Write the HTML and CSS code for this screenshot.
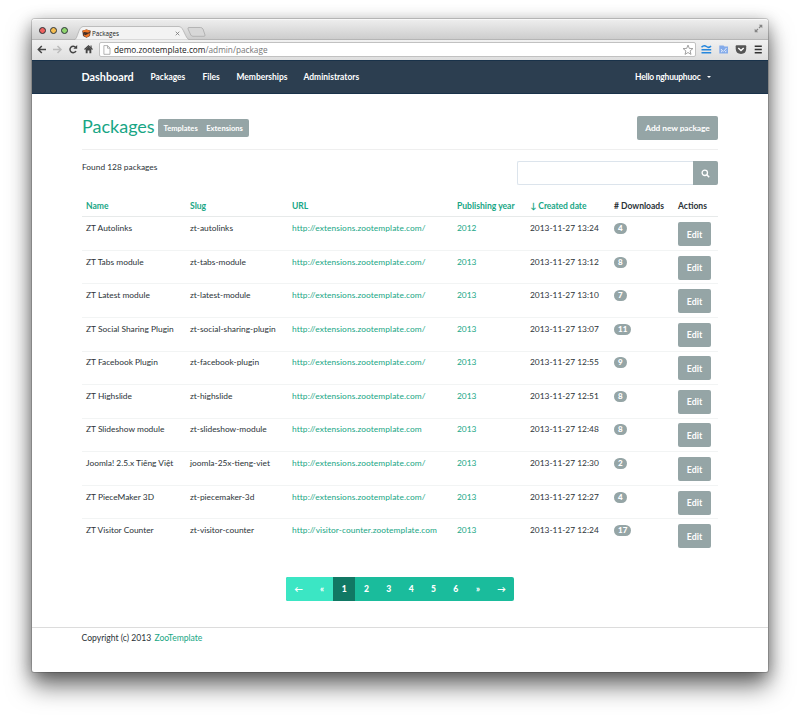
FILE: index.html
```html
<!DOCTYPE html>
<html lang="en">
<head>
<meta charset="utf-8">
<title>Packages</title>
<link rel="stylesheet" href="styles.css">
</head>
<body>
<div class="window">
  <div class="tabstrip">
    <div class="lights"><i class="red"></i><i class="amber"></i><i class="green"></i></div>
    <div class="tab">
      <svg class="tab-shape" width="118" height="14" viewBox="0 0 118 14"><path d="M0 14C4 13.500 4 1 9 .5H105C110 .5 111 13.500 116 14Z" fill="#f3f3f3" stroke="#a9a9a9" stroke-width=".7"/></svg>
      <svg class="favicon" width="9" height="9" viewBox="0 0 9 9"><path d="M.3 1.800L4.500.5 8.700 1.800 8 7 4.500 8.700 1 7Z" fill="#51362c"/><path d="M.3 1.800L4.500.6 8.400 1.900 5.300 4.200 1.500 3.500ZM1.200 6L5 5.500 7.800 4 7.500 6.700 4.500 8.400Z" fill="#ed7627"/><path d="M2 3.500L5.500 4 3 6" fill="none" stroke="#30241f" stroke-width=".9"/></svg>
      <span class="tab-title">Packages</span>
      <svg class="tab-close" width="5" height="5" viewBox="0 0 5 5"><path d="M.7.7L4.300 4.300M4.300.7L.7 4.300" stroke="#777" stroke-width=".8"/></svg>
    </div>
    <svg class="newtab" width="20" height="10" viewBox="0 0 20 10"><path d="M2 .5H13.500Q15 .5 16 2L18 8Q18.300 9.300 17 9.300H6Q4.500 9.300 3.800 8L1 2Q.5.5 2 .5Z" fill="#d7d7d7" stroke="#a9a9a9" stroke-width=".8"/></svg>
    <svg class="expand" width="9" height="9" viewBox="0 0 9 9"><path d="M4.800.7H8.300V4.200ZM.7 4.800V8.300H4.200Z" fill="#858585"/><path d="M5 4L7 2M2 7L4 5" stroke="#858585" stroke-width="1.200"/></svg>
  </div>
  <div class="toolbar">
    <svg class="tools" width="64" height="20" viewBox="0 0 64 20" fill="none" stroke-width="1.500"><path d="M14 9.500H6.500M9.800 6L6.300 9.500 9.800 13" stroke="#454545"/><path d="M21 9.500H28.500M25.500 6L29 9.500 25.500 13" stroke="#bcbcbc"/><path d="M44 11A3.200 3.200 0 1 1 43.700 7.500" stroke="#454545"/><path d="M45.200 5V8.800H41.400Z" fill="#454545"/><path d="M52.500 9.500L56.500 5.800 60.500 9.500" stroke="#454545" stroke-width="1.200"/><path d="M53.700 9L56.500 6.500 59.300 9V13.200H57.400V10.500H55.600V13.200H53.700ZM58.500 5.500H59.600V8H58.500Z" fill="#454545"/></svg>
    <div class="address">
      <svg width="8" height="10" viewBox="0 0 8 10"><path d="M.9.6H4.700L7 3V9.300H.9ZM4.500.8V3.200H7" fill="#fff" stroke="#a0a0a0" stroke-width=".8"/></svg>
      <span class="url">demo.zootemplate.com<span>/admin/package</span></span>
      <svg class="star" width="12" height="12" viewBox="0 0 12 12"><path d="M6 1.100L7.300 4.400 10.900 4.600 8.100 6.900 9 10.400 6 8.500 3 10.400 3.900 6.900 1.100 4.600 4.700 4.400Z" fill="#fff" stroke="#8c8c8c" stroke-width=".8"/></svg>
    </div>
    <svg class="extensions" width="72" height="20" viewBox="0 0 72 20"><g stroke="#2687dd" fill="none" stroke-width="1.500"><path d="M5.500 7.300Q8 4.500 10.500 6.500T15 6M5.500 9.800H15.200M5.500 12.700H15.200"/></g><path d="M23.300 5.500H27.500L28.500 6.500H32V13.500H23.300Z" fill="#84abea"/><path d="M25 9L26.500 11 25 12M27.500 11.500L30.500 8M29 12L30.500 11" stroke="#fff" fill="none" stroke-width=".8"/><path d="M40.500 5.300H49.300Q50.200 5.300 50.200 6.200V9Q50 13.800 45 14Q40 13.800 39.700 9V6.200Q39.700 5.300 40.500 5.300Z" fill="#555"/><path d="M42.300 8L45 10.500 47.700 8" stroke="#fff" stroke-width="1.500" fill="none"/><path d="M58.700 6.300H65.800M58.700 9.500H65.800M58.700 12.700H65.800" stroke="#333" stroke-width="1.500"/></svg>
  </div>
  <nav class="nav">
    <a class="brand">Dashboard</a><a class="n1">Packages</a><a class="n2">Files</a><a class="n3">Memberships</a><a class="n4">Administrators</a>
    <a class="user">Hello nghuuphuoc<i class="caret"></i></a>
  </nav>
  <main class="container">
    <header class="page-header">
      <h1>Packages</h1>
      <div class="group"><a>Templates</a><a>Extensions</a></div>
      <button class="btn add">Add new package</button>
    </header>
    <div class="filter">
      <p>Found 128 packages</p>
      <div class="search"><input type="text" aria-label="Search"><button class="btn" aria-label="Search"><svg width="9" height="9" viewBox="0 0 9 9"><circle cx="3.800" cy="3.800" r="2.700" fill="none" stroke="#fff" stroke-width="1.300"/><path d="M5.800 5.800L8.200 8.200" stroke="#fff" stroke-width="1.500"/></svg></button></div>
    </div>
    <table>
      <colgroup><col class="c1"><col class="c2"><col class="c3"><col class="c4"><col class="c5"><col class="c6"><col class="c7"></colgroup>
      <thead><tr><th><a>Name</a></th><th><a>Slug</a></th><th><a>URL</a></th><th><a>Publishing year</a></th><th class="sorted"><a>↓ Created date</a></th><th># Downloads</th><th>Actions</th></tr></thead>
      <tbody>
      <tr><td>ZT Autolinks</td><td>zt-autolinks</td><td><a>http://extensions.zootemplate.com/</a></td><td><a>2012</a></td><td>2013-11-27 13:24</td><td><span class="badge">4</span></td><td><button class="btn edit">Edit</button></td></tr>
      <tr><td>ZT Tabs module</td><td>zt-tabs-module</td><td><a>http://extensions.zootemplate.com/</a></td><td><a>2013</a></td><td>2013-11-27 13:12</td><td><span class="badge">8</span></td><td><button class="btn edit">Edit</button></td></tr>
      <tr><td>ZT Latest module</td><td>zt-latest-module</td><td><a>http://extensions.zootemplate.com/</a></td><td><a>2013</a></td><td>2013-11-27 13:10</td><td><span class="badge">7</span></td><td><button class="btn edit">Edit</button></td></tr>
      <tr><td>ZT Social Sharing Plugin</td><td>zt-social-sharing-plugin</td><td><a>http://extensions.zootemplate.com/</a></td><td><a>2013</a></td><td>2013-11-27 13:07</td><td><span class="badge">11</span></td><td><button class="btn edit">Edit</button></td></tr>
      <tr><td>ZT Facebook Plugin</td><td>zt-facebook-plugin</td><td><a>http://extensions.zootemplate.com/</a></td><td><a>2013</a></td><td>2013-11-27 12:55</td><td><span class="badge">9</span></td><td><button class="btn edit">Edit</button></td></tr>
      <tr><td>ZT Highslide</td><td>zt-highslide</td><td><a>http://extensions.zootemplate.com/</a></td><td><a>2013</a></td><td>2013-11-27 12:51</td><td><span class="badge">8</span></td><td><button class="btn edit">Edit</button></td></tr>
      <tr><td>ZT Slideshow module</td><td>zt-slideshow-module</td><td><a>http://extensions.zootemplate.com</a></td><td><a>2013</a></td><td>2013-11-27 12:48</td><td><span class="badge">8</span></td><td><button class="btn edit">Edit</button></td></tr>
      <tr><td>Joomla! 2.5.x Tiếng Việt</td><td>joomla-25x-tieng-viet</td><td><a>http://extensions.zootemplate.com/</a></td><td><a>2013</a></td><td>2013-11-27 12:30</td><td><span class="badge">2</span></td><td><button class="btn edit">Edit</button></td></tr>
      <tr><td>ZT PieceMaker 3D</td><td>zt-piecemaker-3d</td><td><a>http://extensions.zootemplate.com/</a></td><td><a>2013</a></td><td>2013-11-27 12:27</td><td><span class="badge">4</span></td><td><button class="btn edit">Edit</button></td></tr>
      <tr><td>ZT Visitor Counter</td><td>zt-visitor-counter</td><td><a>http://visitor-counter.zootemplate.com</a></td><td><a>2013</a></td><td>2013-11-27 12:24</td><td><span class="badge">17</span></td><td><button class="btn edit">Edit</button></td></tr>
      </tbody>
    </table>
    <div class="pager"><a class="off">←</a><a class="off">«</a><a class="on">1</a><a>2</a><a>3</a><a>4</a><a>5</a><a>6</a><a>»</a><a>→</a></div>
  </main>
  <footer>Copyright (c) 2013 <a>ZooTemplate</a></footer>
</div>
</body>
</html>
```
FILE: styles.css
```css
* { box-sizing: border-box; }
html, body { height: 716px; overflow: hidden; }
body { margin: 0; padding: 19px 0 0 32px; background: #fff; font-family: Lato, "Open Sans", sans-serif; font-size: 8.4px; color: #2b3338; }
a { color: #18a685; text-decoration: none; }
svg { display: block; flex: none; }
.window { width: 736px; height: 653px; display: flex; flex-direction: column; background: #fff; border-radius: 3px 3px 2px 2px; box-shadow: 0 0 0 1px rgba(0,0,0,.16), 0 3px 16px rgba(0,0,0,.3), 0 14px 25px rgba(0,0,0,.55); }
.tabstrip { height: 21px; display: flex; align-items: flex-end; background: linear-gradient(#ededed, #cdcdcd); border-top: 1px solid #f8f8f8; border-bottom: 1px solid #b5b5b5; border-radius: 3px 3px 0 0; }
.lights { display: flex; gap: 4px; padding: 0 0 5px 6.5px; width: 42px; flex: none; }
.lights i { width: 7px; height: 7px; border-radius: 50%; border: 1px solid; }
.red { background: #f0625f; border-color: #c93d40; }
.amber { background: #f6bd50; border-color: #c9913d; }
.green { background: #8fd56e; border-color: #62a44b; }
.tab { position: relative; width: 118px; height: 14px; display: flex; align-items: center; padding-left: 8px; margin-bottom: -1px; }
.tab-shape { position: absolute; left: 0; top: 0; }
.favicon, .tab-title, .tab-close { position: relative; }
.tab-title { margin-left: 1px; font: 6.3px "Open Sans", sans-serif; color: #222; width: 83px; }
.newtab { margin: 0 0 2px -5px; }
.expand { margin: 0 5px 6px auto; }
.toolbar { height: 20px; display: flex; background: linear-gradient(#f1f1f1, #dedede); }
.tools { margin-right: 3px; }
.address { width: 597px; height: 15px; margin-top: 2px; display: flex; align-items: center; padding-left: 3px; background: #fff; border: 1px solid #c1c1c1; border-radius: 2px; }
.url { margin-left: 3px; font: 8.25px "Open Sans", sans-serif; color: #222; white-space: nowrap; }
.url span { color: #777; }
.star { margin: 0 1px 0 auto; }
.nav { height: 34px; display: flex; align-items: center; padding: 0 57.5px 1px 49.5px; background: #2c3e50; border-top: 1px solid #19324a; border-bottom: 1px solid #19324a; }
.nav a { color: #fff; font-weight: 700; font-size: 8.45px; white-space: nowrap; }
.nav .brand { font-size: 10.8px; width: 69px; }
.nav .n1 { width: 52px; }
.nav .n2 { width: 34px; }
.nav .n3 { width: 67px; }
.nav .user { margin-left: auto; display: flex; align-items: center; letter-spacing: -.2px; }
.caret { margin-left: 6px; border: 2px solid transparent; border-top-color: #fff; border-bottom: 0; }
.container { width: 636px; margin-left: 50px; }
.page-header { height: 56px; display: flex; align-items: flex-start; padding-top: 22px; border-bottom: 1px solid #efefef; }
h1 { margin: -1px 0 0; width: 76px; font-size: 18px; font-weight: 400; line-height: 22px; color: #18a685; }
.group { display: flex; width: 91px; height: 18px; margin-top: 3px; background: #95a5a6; border-radius: 2px; align-items: center; padding-left: 5.5px; }
.group a { color: #fff; font-weight: 700; font-size: 7.6px; width: 44.5px; }
.btn { display: flex; align-items: center; justify-content: center; padding: 0; border: 0; border-radius: 2px; background: #95a5a6; color: #fff; font: 700 8.4px Lato, sans-serif; height: 24px; }
.add { width: 81px; margin-left: auto; letter-spacing: -.08px; }
.filter { height: 45px; display: flex; justify-content: space-between; padding-top: 11px; }
.filter p { margin: 0; line-height: 12px; font-size: 8.35px; }
.search { display: flex; height: 24px; }
.search input { width: 176px; height: 24px; padding: 0 5px; border: 1px solid #dce4ec; border-right: 0; border-radius: 2px 0 0 2px; }
.search .btn { width: 25px; border-radius: 0 2px 2px 0; }
table { width: 636px; table-layout: fixed; border-collapse: separate; border-spacing: 0; }
.c1 { width: 104px; } .c2 { width: 102px; } .c3 { width: 165px; } .c4 { width: 73px; } .c5 { width: 84px; } .c6 { width: 64px; } .c7 { width: 44px; }
th { height: 22.4px; padding: 0 0 0 4px; text-align: left; vertical-align: middle; font-weight: 700; font-size: 8.55px; white-space: nowrap; border-bottom: 1px solid #e7eaea; }
th.sorted { letter-spacing: -.08px; }
td { height: 33.55px; padding: 4.8px 0 0 4px; vertical-align: top; line-height: 12px; white-space: nowrap; border-bottom: 1px solid #f2f4f4; }
td:nth-child(3) { letter-spacing: .08px; }
tr:last-child td { border-bottom: 0; }
.edit { width: 33px; font-size: 8.8px; }
.badge { display: inline-block; min-width: 12px; height: 11px; padding: 0 4px; border-radius: 5.5px; background: #95a5a6; color: #fff; font-weight: 900; font-size: 8px; line-height: 11px; text-align: center; }
.pager { width: 228px; height: 24px; margin: 24px 0 0 204px; display: flex; background: #1abc9c; border-radius: 2px; overflow: hidden; }
.pager a { width: 22.4px; display: flex; align-items: center; justify-content: center; color: #fff; font-weight: 900; font-size: 8.6px; }
.pager a:first-child, .pager a:last-child { width: 25px; }
.pager .off { background: #3be6c4; }
.pager .on { background: #117864; }
footer { margin-top: auto; height: 45px; padding: 4px 0 0 49.5px; border-top: 1px solid #dcdcdc; line-height: 12px; font-size: 8.6px; }
footer a { margin-left: 1px; }
```
